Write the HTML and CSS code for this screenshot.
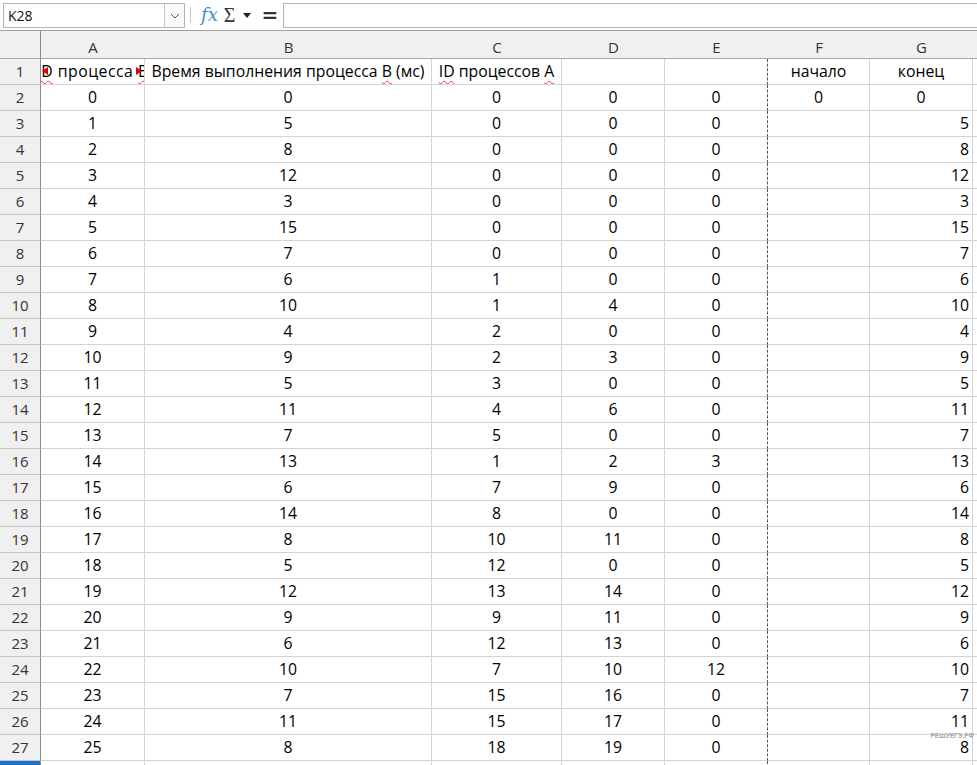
FILE: index.html
```html
<!DOCTYPE html>
<html lang="ru">
<head>
<meta charset="UTF-8">
<title>Calc</title>
<link rel="stylesheet" href="styles.css">
</head>
<body>

<div class="toolbar">
    <div class="namebox">
        <span class="name">K28</span>
        <span class="drop">
            <svg width="10" height="6" viewBox="0 0 10 6"><path d="M1 1 L5 5 L9 1" fill="none" stroke="#555" stroke-width="1"/></svg>
        </span>
    </div>
    <span class="sep"></span>
    <span class="fx">fx</span>
    <span class="sigma">&Sigma;</span>
    <svg class="arrow" width="8" height="5" viewBox="0 0 8 5"><path d="M0 0 H8 L4 5 Z" fill="#222"/></svg>
    <span class="equal">=</span>
    <div class="formula"></div>
</div>

<div class="sheet" id="sheet">
    <div class="corner"></div>
    <div class="colhead">A</div>
    <div class="colhead">B</div>
    <div class="colhead">C</div>
    <div class="colhead">D</div>
    <div class="colhead">E</div>
    <div class="colhead">F</div>
    <div class="colhead">G</div>
    <div class="colhead rest"></div>

    <div class="rowhead">1</div>
    <div class="cell clip"><span class="mark left"></span><span class="inner"><span class="typo">ID</span> процесса <span class="typo">В</span></span><span class="mark right"></span></div>
    <div class="cell">Время выполнения процесса <span class="typo">В</span> (мс)</div>
    <div class="cell"><span class="typo">ID</span> процессов <span class="typo">А</span></div>
    <div class="cell"></div>
    <div class="cell break"></div>
    <div class="cell">начало</div>
    <div class="cell">конец</div>
    <div class="cell rest"></div>

    <div class="rowhead">2</div>
    <div class="cell">0</div>
    <div class="cell">0</div>
    <div class="cell">0</div>
    <div class="cell">0</div>
    <div class="cell break">0</div>
    <div class="cell">0</div>
    <div class="cell">0</div>
    <div class="cell rest"></div>
</div>

<div class="watermark">РЕШУЕГЭ.РФ</div>

<script>
    /* Строки 3..27: A, B, C, D, E (G = B) */
    const rows = [
        [1, 5, 0, 0, 0], [2, 8, 0, 0, 0], [3, 12, 0, 0, 0], [4, 3, 0, 0, 0],
        [5, 15, 0, 0, 0], [6, 7, 0, 0, 0], [7, 6, 1, 0, 0], [8, 10, 1, 4, 0],
        [9, 4, 2, 0, 0], [10, 9, 2, 3, 0], [11, 5, 3, 0, 0], [12, 11, 4, 6, 0],
        [13, 7, 5, 0, 0], [14, 13, 1, 2, 3], [15, 6, 7, 9, 0], [16, 14, 8, 0, 0],
        [17, 8, 10, 11, 0], [18, 5, 12, 0, 0], [19, 12, 13, 14, 0], [20, 9, 9, 11, 0],
        [21, 6, 12, 13, 0], [22, 10, 7, 10, 12], [23, 7, 15, 16, 0], [24, 11, 15, 17, 0],
        [25, 8, 18, 19, 0]
    ];
    const sheet = document.getElementById('sheet');

    function addCell(cls, text) {
        const div = document.createElement('div');
        div.className = cls;
        div.textContent = text;
        sheet.appendChild(div);
    }

    rows.forEach((r, i) => {
        addCell('rowhead', i + 3);
        addCell('cell', r[0]);
        addCell('cell', r[1]);
        addCell('cell', r[2]);
        addCell('cell', r[3]);
        addCell('cell break', r[4]);
        addCell('cell', '');
        addCell('cell num', r[1]);
        addCell('cell rest', '');
    });

    /* Строка 28 (выделенная) */
    addCell('rowhead active', '');
    for (let i = 0; i < 8; i++) {
        addCell(i === 4 ? 'cell break' : (i === 7 ? 'cell rest' : 'cell'), '');
    }
</script>

</body>
</html>
```

FILE: styles.css
```css
/* Таблица в стиле LibreOffice Calc */
body {
    margin: 0;
    padding: 0;
    font-family: "Open Sans", "Noto Sans", sans-serif;
    background-color: #fff;
    width: 977px;
    height: 765px;
    overflow: hidden;
    position: relative;
}

.toolbar {
    display: flex;
    align-items: center;
    height: 31px;
    padding-left: 3px;
    box-sizing: border-box;
    background-color: #fff;
    border-bottom: 1px solid #a0a0a0;
}

.namebox {
    display: flex;
    width: 182px;
    height: 25px;
    box-sizing: border-box;
    border: 1px solid #b4b4b4;
    margin-top: 1px;
}

.name {
    flex: 1;
    font-size: 14px;
    line-height: 23px;
    padding-left: 4px;
    color: #111;
}

.drop {
    width: 19px;
    display: flex;
    align-items: center;
    justify-content: center;
    border-left: 1px solid #c8c8c8;
    background-color: #fafafa;
}

.sep {
    width: 1px;
    height: 16px;
    background-color: #c8c8c8;
    margin: 0 10px 0 5px;
}

.fx {
    font-family: "DejaVu Serif", serif;
    font-style: italic;
    font-size: 18px;
    color: #3b8fd6;
    margin-right: 6px;
    line-height: 20px;
}

.sigma {
    font-family: "Liberation Serif", serif;
    font-size: 20px;
    color: #333;
    margin-right: 8px;
    line-height: 20px;
}

.arrow {
    margin-right: 10px;
}

.equal {
    font-family: "DejaVu Sans", sans-serif;
    font-size: 20px;
    font-weight: bold;
    color: #333;
    margin-right: 5px;
    line-height: 20px;
}

.formula {
    flex: 1;
    height: 25px;
    box-sizing: border-box;
    border: 1px solid #b4b4b4;
    border-right: none;
    margin-top: 1px;
}

.sheet {
    display: grid;
    grid-template-columns: 41px 104px 287px 130px 103px 103px 102px 103px 4px;
    grid-auto-rows: 26px;
    grid-template-rows: 28px;
    background-color: #fff;
}

.corner,
.colhead {
    background-color: #f0f0f0;
    border-bottom: 1px solid #a8a8a8;
    box-sizing: border-box;
    position: relative;
}

.corner {
    border-right: 1px solid #8c8c8c;
}

.colhead {
    font-size: 15px;
    color: #333;
    text-align: center;
    padding-top: 6px;
    line-height: 21px;
}

.colhead::after {
    content: "";
    position: absolute;
    right: -1px;
    top: 6px;
    bottom: 0;
    width: 1px;
    background-color: #a8a8a8;
}

.colhead.rest::after {
    display: none;
}

.rowhead {
    background-color: #f0f0f0;
    border-right: 1px solid #8c8c8c;
    border-bottom: 1px solid #c4c4c4;
    box-sizing: border-box;
    font-size: 15px;
    color: #333;
    text-align: center;
    line-height: 25px;
}

.rowhead.active {
    background-color: #1a73c9;
}

.cell {
    border-right: 1px solid #d4d4d4;
    border-bottom: 1px solid #d4d4d4;
    box-sizing: border-box;
    font-size: 15.8px;
    color: #000;
    text-align: center;
    line-height: 25px;
    white-space: nowrap;
    overflow: hidden;
}

.cell.num {
    text-align: right;
    padding-right: 3px;
}

.cell.rest {
    border-right: none;
}

.cell.break {
    border-right: 1px dashed #555;
}

.cell.clip {
    position: relative;
    display: flex;
    justify-content: center;
}

.clip .inner {
    display: block;
    flex-shrink: 0;
    letter-spacing: 0.5px;
}

.mark {
    position: absolute;
    top: 8px;
    width: 0;
    height: 0;
    border-top: 4px solid transparent;
    border-bottom: 4px solid transparent;
}

.mark.left {
    left: 1px;
    border-right: 6px solid #e00000;
}

.mark.right {
    right: 2px;
    border-left: 6px solid #e00000;
}

.typo {
    text-decoration: underline wavy #e04040;
    text-decoration-thickness: 1px;
    text-underline-offset: 3px;
}

.watermark {
    position: absolute;
    right: 3px;
    top: 732px;
    font-family: "Liberation Sans", sans-serif;
    font-size: 6.5px;
    font-weight: bold;
    color: #a8a8a8;
    line-height: 7px;
}
```
